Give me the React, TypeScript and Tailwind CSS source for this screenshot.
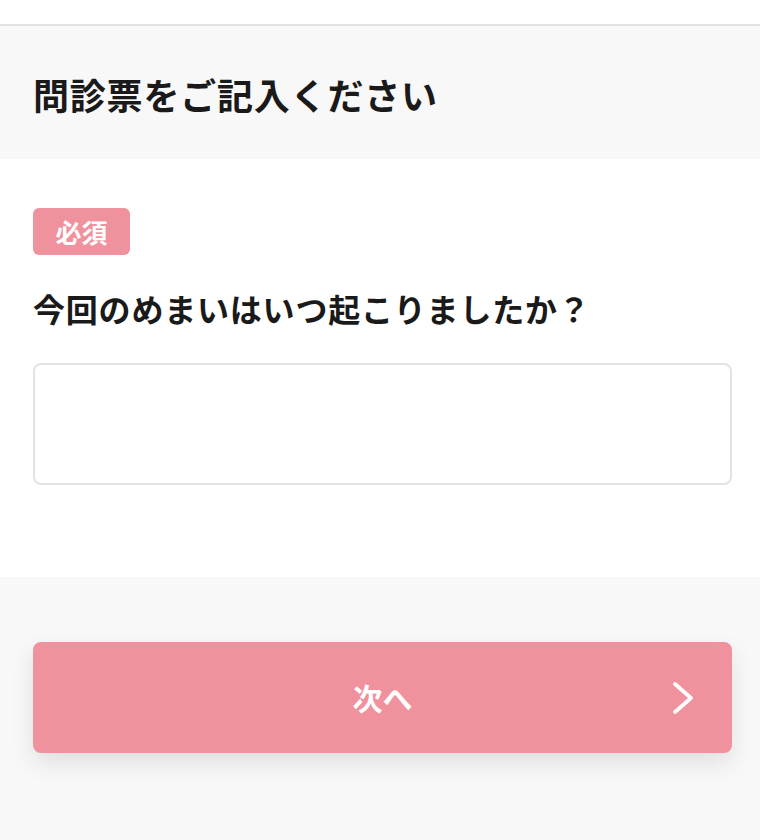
export default function App() {
  return (
    <div
      className="min-h-[840px] w-[760px] bg-[#f8f8f8] text-[#1a1a1a]"
      style={{ fontFamily: '"Noto Sans CJK JP", "Noto Sans", sans-serif' }}
    >
      <div className="h-[26px] bg-white border-b-2 border-[#e2e2e2]" />

      <div className="h-[133px] px-[33px] pt-[44px]">
        <h1 className="text-[36px] font-bold leading-[48px] tracking-[0.8px]">問診票をご記入ください</h1>
      </div>

      <div className="bg-white h-[418px] px-[33px] pt-[49px]">
        <span className="inline-flex h-[47px] w-[97px] items-center justify-center rounded-[6px] bg-[#f0919e] text-[26px] font-bold text-white">
          必須
        </span>
        <p className="mt-[30px] text-[32px] font-bold leading-[46px] tracking-[0.8px]">今回のめまいはいつ起こりましたか？</p>
        <div className="mt-[32px] h-[122px] w-[699px] rounded-[8px] border-2 border-[#e3e3e3] bg-white" />
      </div>

      <div className="px-[33px] pt-[65px]">
        <button className="relative flex h-[111px] w-[699px] items-center justify-center rounded-[8px] bg-[#f0919e] text-[30px] font-bold text-white shadow-[0_10px_24px_rgba(0,0,0,0.1)]">
          次へ
          <svg
            className="absolute right-[37px] top-1/2 -translate-y-1/2"
            width="24"
            height="34"
            viewBox="0 0 24 34"
            fill="none"
            stroke="currentColor"
            strokeWidth="3.8"
            strokeLinecap="round"
            strokeLinejoin="round"
          >
            <polyline points="4,3 20,17 4,31" />
          </svg>
        </button>
      </div>
    </div>
  );
}
